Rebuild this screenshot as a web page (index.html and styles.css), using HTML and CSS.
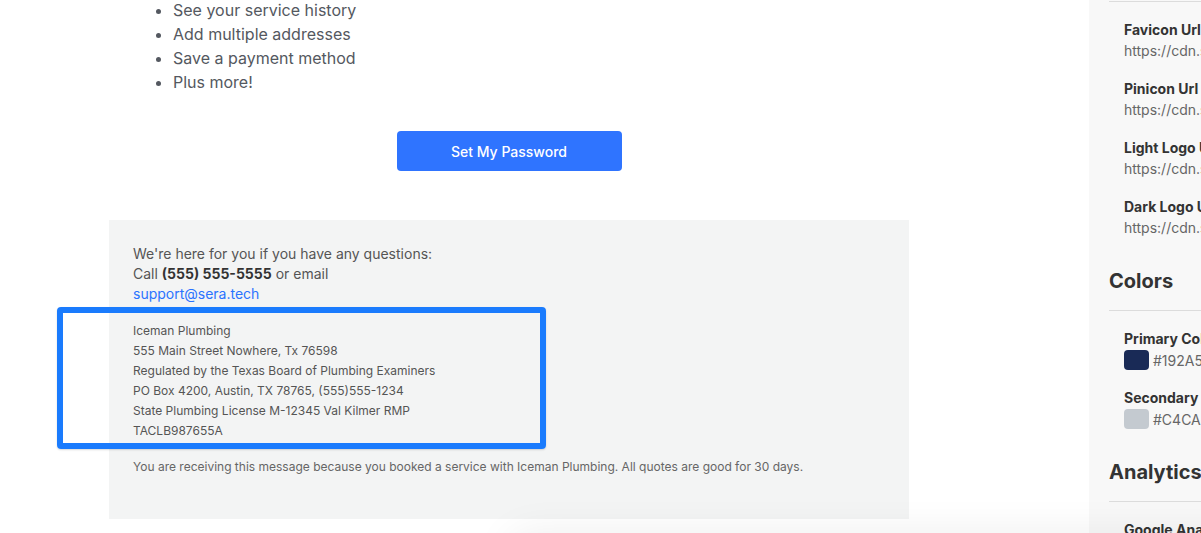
FILE: index.html
```html
<!DOCTYPE html>
<html lang="en">
<head>
    <meta charset="UTF-8">
    <meta name="viewport" content="width=device-width, initial-scale=1.0">
    <title>Email Preview</title>
    <link rel="stylesheet" href="styles.css">
</head>
<body>
<div class="page">
    <main class="main">
        <div class="email">
            <ul class="perks">
                <li>See your service history</li>
                <li>Add multiple addresses</li>
                <li>Save a payment method</li>
                <li>Plus more!</li>
            </ul>

            <div class="cta">
                <a class="btn" href="#">Set My Password</a>
            </div>

            <div class="footer">
                <p class="help">
                    We're here for you if you have any questions:<br>
                    Call <strong>(555) 555-5555</strong> or email<br>
                    <a href="mailto:support@sera.tech">support@sera.tech</a>
                </p>

                <div class="address">
                    <div>Iceman Plumbing</div>
                    <div>555 Main Street Nowhere, Tx 76598</div>
                    <div>Regulated by the Texas Board of Plumbing Examiners</div>
                    <div>PO Box 4200, Austin, TX 78765, (555)555-1234</div>
                    <div>State Plumbing License M-12345 Val Kilmer RMP</div>
                    <div>TACLB987655A</div>
                    <div class="highlight"></div>
                </div>

                <p class="disclaimer">You are receiving this message because you booked a service with Iceman Plumbing. All quotes are good for 30 days.</p>
            </div>
        </div>
    </main>

    <aside class="sidebar">
        <hr class="rule">
        <div class="fields">
            <div class="field">
                <div class="label">Favicon Url</div>
                <div class="value">https://cdn.sera.tech/favicon.png</div>
            </div>
            <div class="field">
                <div class="label">Pinicon Url</div>
                <div class="value">https://cdn.sera.tech/pinicon.png</div>
            </div>
            <div class="field">
                <div class="label">Light Logo Url</div>
                <div class="value">https://cdn.sera.tech/logo-light.png</div>
            </div>
            <div class="field">
                <div class="label">Dark Logo Url</div>
                <div class="value">https://cdn.sera.tech/logo-dark.png</div>
            </div>
        </div>

        <h3 class="section-title">Colors</h3>
        <hr class="rule">
        <div class="fields">
            <div class="field">
                <div class="label">Primary Color</div>
                <div class="color"><span class="swatch primary"></span>#192A56</div>
            </div>
            <div class="field">
                <div class="label">Secondary Color</div>
                <div class="color"><span class="swatch secondary"></span>#C4CAD0</div>
            </div>
        </div>

        <h3 class="section-title">Analytics</h3>
        <hr class="rule">
        <div class="fields">
            <div class="field">
                <div class="label">Google Analytics ID</div>
                <div class="value">UA-00000000-1</div>
            </div>
        </div>
    </aside>
</div>
<div class="shade"></div>
</body>
</html>
```

FILE: styles.css
```css
html, body {
    margin: 0;
    height: 100%;
    overflow: hidden;
}
body {
    font-family: Inter, "Liberation Sans", Arial, sans-serif;
    background: #fff;
    position: relative;
}
.page {
    display: flex;
    height: 100%;
}
.main {
    width: 1089px;
    flex-shrink: 0;
    padding-left: 109px;
    box-sizing: border-box;
}
.email {
    width: 800px;
}
.perks {
    margin: -2px 0 0;
    padding-left: 64px;
    font-size: 16px;
    line-height: 24px;
    color: #545860;
}
.cta {
    display: flex;
    justify-content: center;
    margin-top: 37px;
}
.btn {
    display: flex;
    align-items: center;
    justify-content: center;
    width: 225px;
    height: 40px;
    background-color: #2f74ff;
    color: white;
    font-size: 14px;
    font-weight: 500;
    text-decoration: none;
    border-radius: 4px;
}
.footer {
    margin-top: 49px;
    background: #f3f4f4;
    padding: 24px 24px 44px;
    height: 299px;
    box-sizing: border-box;
}
.help {
    margin: 0;
    font-size: 14px;
    line-height: 20px;
    color: #555;
}
.help strong {
    color: #333;
    font-weight: 700;
}
.help a {
    color: #2a73ff;
    text-decoration: none;
}
.address {
    position: relative;
    margin-top: 17px;
    font-size: 12px;
    line-height: 20px;
    color: #555;
}
.highlight {
    position: absolute;
    left: -76px;
    top: -14px;
    width: 489px;
    height: 142px;
    box-sizing: border-box;
    border: 6px solid #1a7bfd;
    border-radius: 4px;
    box-shadow: 0 1px 2px rgba(0, 0, 0, 0.15);
}
.disclaimer {
    margin: 18px 0 0;
    font-size: 12px;
    line-height: 16px;
    color: #666;
}
.sidebar {
    width: 340px;
    flex-shrink: 0;
    background: #f8f8f8;
    padding: 1px 0 0 20px;
    box-sizing: border-box;
    white-space: nowrap;
    overflow: hidden;
}
.rule {
    margin: 0;
    border: none;
    border-top: 1px solid #dcdcdc;
}
.section-title {
    margin: 0;
    padding-bottom: 15px;
    font-size: 20px;
    line-height: 28px;
    font-weight: 700;
    color: #333;
}
.fields {
    padding: 18px 0 11px 15px;
}
.field {
    margin-bottom: 17px;
    font-size: 14px;
}
.label {
    line-height: 20px;
    font-weight: 700;
    color: #333;
}
.value {
    line-height: 22px;
    color: #666;
}
.color {
    display: flex;
    align-items: center;
    gap: 4px;
    height: 22px;
    color: #666;
}
.swatch {
    display: inline-block;
    width: 25px;
    height: 20px;
    border-radius: 4px;
}
.swatch.primary {
    background: #192a56;
}
.swatch.secondary {
    background: #c4cad0;
}
.shade {
    position: absolute;
    left: 520px;
    top: 545px;
    width: 900px;
    height: 60px;
    border-radius: 10px;
    box-shadow: 0 0 40px 12px rgba(0, 0, 0, 0.07);
}
```
